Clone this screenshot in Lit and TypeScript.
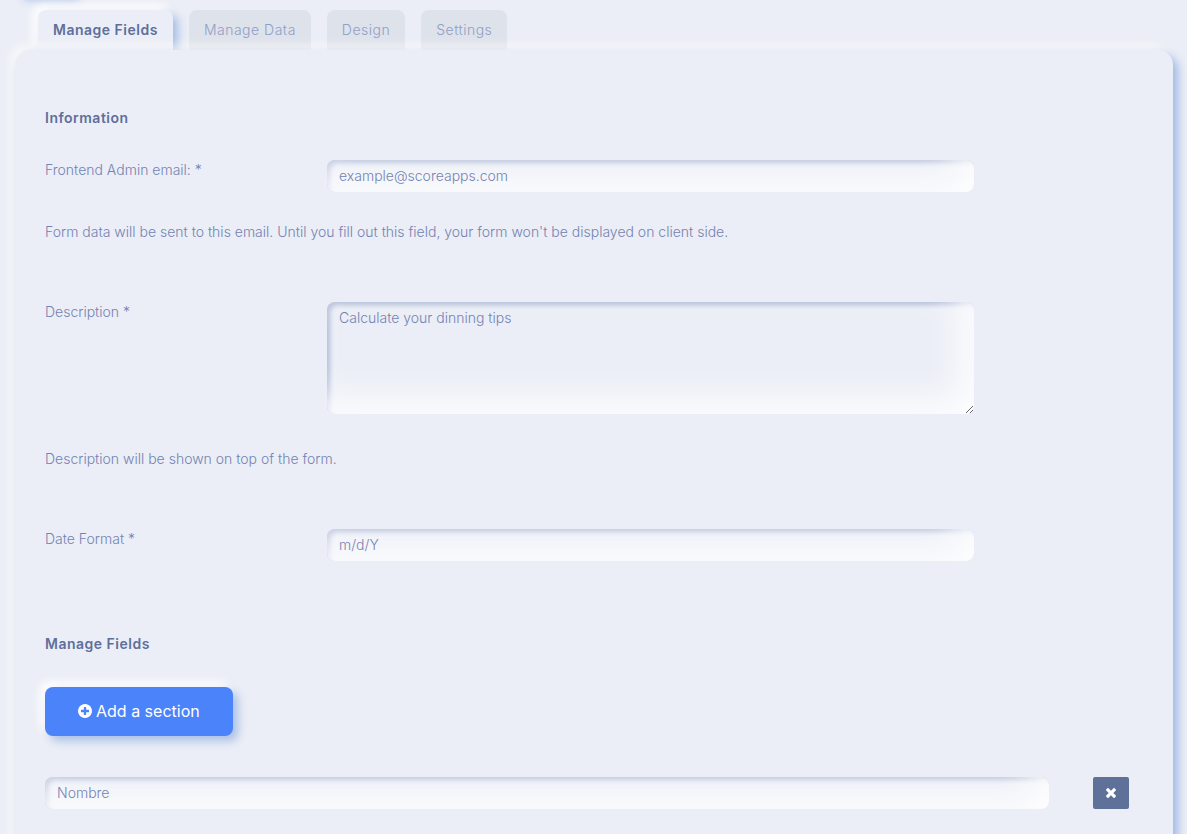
import { LitElement, html, css } from "lit";
import { customElement, state } from "lit/decorators.js";

const TABS = ["Manage Fields", "Manage Data", "Design", "Settings"];

@customElement("app-root")
export class AppRoot extends LitElement {
  static styles = css`
    :host {
      display: block;
      box-sizing: border-box;
      height: 100vh;
      overflow: hidden;
      background: #ebeef6;
      color: #7483b3;
      font: 300 14px/20px Inter, "Open Sans", sans-serif;
    }
    * {
      box-sizing: border-box;
    }
    .toolbar-edge {
      width: 60px;
      height: 40px;
      margin: -45px 0 15px 17px;
      border-radius: 8px;
      box-shadow: 5px 5px 10px #a9bfe8;
    }
    .tabs {
      display: flex;
      gap: 16px;
      padding: 0 38px;
    }
    .tab {
      height: 40px;
      padding: 0 15px;
      border: 0;
      border-radius: 8px 8px 0 0;
      background: #dee2eb;
      color: #919ec5;
      font: inherit;
      letter-spacing: 0.5px;
      cursor: pointer;
    }
    .tab.active {
      background: #ebeef6;
      color: #5f6f9b;
      font-weight: 600;
      box-shadow: 5px 5px 10px #a5bde6, -5px -5px 10px #fff;
    }
    .panel {
      position: relative;
      min-height: 100%;
      margin: 0 14px 0 15px;
      padding: 58px 30px 60px;
      border-radius: 15px;
      background: #ebeef6;
      box-shadow: 5px 5px 10px #a0b9e6, -5px -5px 10px rgba(255, 255, 250, 0.6);
    }
    .title {
      margin: 0;
      color: #5f6f9b;
      font-size: 14px;
      line-height: 20px;
      font-weight: 600;
      letter-spacing: 0.5px;
    }
    .row {
      display: grid;
      grid-template-columns: 25% 60%;
      margin: 0 -15px;
    }
    .cell {
      padding: 0 15px;
    }
    .title + .row {
      margin-top: 32px;
    }
    .help {
      margin: 30px 0 60px;
    }
    .area-help {
      margin-top: 35px;
    }
    .field {
      display: block;
      width: 100%;
      height: 32px;
      padding: 5px 12px 7px;
      border: 0;
      border-radius: 8px;
      outline: 0;
      background: #ebeef6;
      color: inherit;
      font: inherit;
      box-shadow: inset -15px -15px 35px #fdfdfe, inset 3px 3px 5px #a6b2d2;
    }
    .field::placeholder {
      color: inherit;
      opacity: 1;
    }
    .area {
      height: 112px;
      padding: 6px 12px;
      resize: vertical;
    }
    .fields-title {
      margin-top: 73px;
    }
    .add {
      display: flex;
      align-items: center;
      gap: 4px;
      height: 49px;
      margin: 33px 0 41px;
      padding: 0 33px 2px;
      border: 0;
      border-radius: 8px;
      background: #4b83fb;
      color: #fff;
      font: inherit;
      font-size: 16px;
      font-weight: 400;
      box-shadow: 5px 5px 10px #a9bfe6, -5px -5px 10px #fff;
      cursor: pointer;
    }
    .section {
      grid-template-columns: 11fr 1fr;
    }
    .remove {
      display: grid;
      place-items: center;
      width: 36px;
      height: 32px;
      margin: 0 auto;
      padding: 0;
      border: 0;
      border-radius: 2px;
      background: #5f7099;
      cursor: pointer;
    }
    svg {
      display: block;
      fill: #fff;
    }
  `;

  @state() private active = 0;

  render() {
    return html`
      <div class="toolbar-edge"></div>
      <nav class="tabs">
        ${TABS.map(
          (name, i) => html`<button
            class="tab ${i === this.active ? "active" : ""}"
            @click=${() => (this.active = i)}
          >${name}</button>`
        )}
      </nav>
      <main class="panel">
        <h2 class="title">Information</h2>
        <div class="row">
          <label class="cell" for="email">Frontend Admin email: *</label>
          <div class="cell">
            <input class="field" id="email" type="email" value="example@scoreapps.com" />
          </div>
        </div>
        <p class="help">
          Form data will be sent to this email. Until you fill out this field, your form won't be displayed on client side.
        </p>
        <div class="row">
          <label class="cell" for="description">Description *</label>
          <div class="cell">
            <textarea class="field area" id="description" .value=${"Calculate your dinning tips"}></textarea>
          </div>
        </div>
        <p class="help area-help">Description will be shown on top of the form.</p>
        <div class="row">
          <label class="cell" for="format">Date Format *</label>
          <div class="cell">
            <input class="field" id="format" type="text" value="m/d/Y" />
          </div>
        </div>
        <h2 class="title fields-title">Manage Fields</h2>
        <button class="add">
          <svg width="14" height="14" viewBox="0 0 1536 1536" aria-hidden="true">
            <path
              d="M1216 832V704q0-26-19-45t-45-19H896V384q0-26-19-45t-45-19H704q-26 0-45 19t-19 45v256H384q-26 0-45 19t-19 45v128q0 26 19 45t45 19h256v256q0 26 19 45t45 19h128q26 0 45-19t19-45V896h256q26 0 45-19t19-45zm320-64q0 209-103 385.500T1153.500 1433 768 1536t-385.500-103T103 1153.500 0 768t103-385.500T382.500 103 768 0t385.500 103T1433 382.500 1536 768z"
            />
          </svg>
          <span>Add a section</span>
        </button>
        <div class="row section">
          <div class="cell">
            <input class="field" type="text" placeholder="Nombre" aria-label="Nombre" />
          </div>
          <div class="cell">
            <button class="remove" aria-label="Remove section">
              <svg width="10" height="10" viewBox="0 0 1188 1188" aria-hidden="true">
                <path
                  d="M1188 956q0 40-28 68l-136 136q-28 28-68 28t-68-28L594 866l-294 294q-28 28-68 28t-68-28L28 1024Q0 996 0 956t28-68l294-294L28 300Q0 272 0 232t28-68L164 28q28-28 68-28t68 28l294 294L888 28q28-28 68-28t68 28l136 136q28 28 28 68t-28 68L866 594l294 294q28 28 28 68z"
                />
              </svg>
            </button>
          </div>
        </div>
      </main>
    `;
  }
}
